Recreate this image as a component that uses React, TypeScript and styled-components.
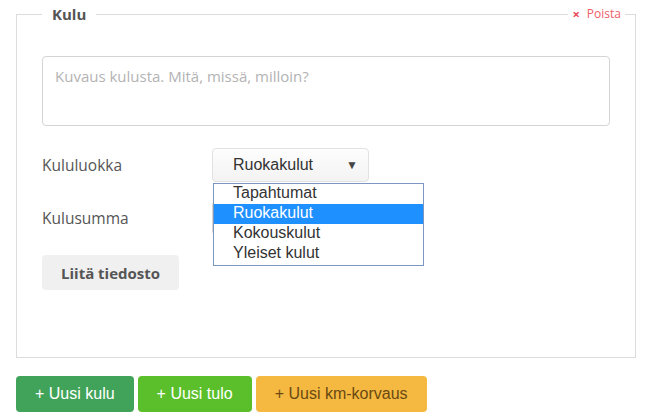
import React from "react";
import styled, { createGlobalStyle } from "styled-components";

const GlobalStyle = createGlobalStyle`
  html, body {
    margin: 0;
    padding: 0;
    background: #fff;
  }
  body {
    font-family: "Open Sans", "Liberation Sans", Arial, sans-serif;
    color: #555;
  }
`;

const Page = styled.div`
  padding: 4px 11px 0 16px;
`;

const Card = styled.div`
  position: relative;
`;

const Fieldset = styled.fieldset`
  margin: 0;
  border: 1px solid #dcdcdc;
  padding: 32px 25px 67px 25px;
  min-width: 0;
`;

const Legend = styled.legend`
  padding: 0 10px;
  font-weight: 700;
  font-size: 15px;
  line-height: 20px;
  color: #555;
`;

const RemoveLink = styled.a`
  position: absolute;
  top: 2px;
  right: 11px;
  padding: 0 4px;
  background: #fff;
  font-size: 12px;
  line-height: 16px;
  color: #ef5d68;
  cursor: pointer;
  display: flex;
  align-items: center;
  gap: 7px;
`;

const Cross = styled.span`
  font-weight: 700;
  font-size: 13px;
  color: #e84a55;
`;

const Textarea = styled.textarea`
  display: block;
  box-sizing: border-box;
  width: 100%;
  height: 70px;
  margin: 0 0 22px 0;
  padding: 8px 12px;
  border: 1px solid #d4d4d4;
  border-radius: 4px;
  resize: none;
  font-family: "Open Sans", sans-serif;
  font-size: 15px;
  line-height: 22px;
  color: #555;
  &::placeholder {
    color: #b3b3b3;
  }
`;

const Row = styled.div<{ $gap: number }>`
  display: grid;
  grid-template-columns: 170px auto;
  align-items: center;
  margin-bottom: ${({ $gap }) => $gap}px;
`;

const Label = styled.label`
  font-size: 15.5px;
  color: #555;
`;

const SelectWrap = styled.div`
  position: relative;
  width: 157px;
`;

const SelectButton = styled.div`
  box-sizing: border-box;
  height: 34px;
  width: 157px;
  padding: 0 10px 0 20px;
  display: flex;
  align-items: center;
  justify-content: space-between;
  border: 1px solid #e2e2e2;
  border-radius: 4px;
  background: linear-gradient(#fdfdfd, #f3f3f3);
  font-family: "Liberation Sans", Arial, sans-serif;
  font-size: 16px;
  color: #333;
`;

const Caret = styled.span`
  font-size: 12px;
  color: #444;
`;

const OptionList = styled.ul`
  position: absolute;
  top: 35px;
  left: 1px;
  width: 211px;
  box-sizing: border-box;
  margin: 0;
  padding: 0 0 1px 0;
  list-style: none;
  background: #fff;
  border: 1px solid #7c96c4;
  z-index: 5;
  font-family: "Liberation Sans", Arial, sans-serif;
  font-size: 16px;
`;

const OptionItem = styled.li<{ $active?: boolean }>`
  height: 20px;
  line-height: 18px;
  padding-left: 19px;
  color: ${({ $active }) => ($active ? "#fff" : "#333")};
  background: ${({ $active }) => ($active ? "#1e90ff" : "transparent")};
`;

const Input = styled.input`
  box-sizing: border-box;
  width: 157px;
  height: 34px;
  border: 1px solid #d4d4d4;
  border-radius: 4px;
  padding: 0 12px;
`;

const AttachButton = styled.button`
  height: 35px;
  padding: 0 19px;
  border: none;
  border-radius: 4px;
  background: #f0f0f0;
  font-family: "Open Sans", sans-serif;
  font-weight: 700;
  font-size: 15px;
  color: #555;
`;

const Actions = styled.div`
  display: flex;
  gap: 4px;
  margin-top: 18px;
`;

const ActionButton = styled.button<{ $bg: string; $fg: string }>`
  height: 36px;
  padding: 0 19px;
  border: none;
  border-radius: 4px;
  background: ${({ $bg }) => $bg};
  color: ${({ $fg }) => $fg};
  font-family: "Liberation Sans", Arial, sans-serif;
  font-size: 16px;
`;

const options = ["Tapahtumat", "Ruokakulut", "Kokouskulut", "Yleiset kulut"];

export default function App() {
  return (
    <Page>
      <GlobalStyle />
      <Card>
        <Fieldset>
          <Legend>Kulu</Legend>
          <Textarea placeholder="Kuvaus kulusta. Mitä, missä, milloin?" />
          <Row $gap={19}>
            <Label>Kululuokka</Label>
            <SelectWrap>
              <SelectButton>
                <span>Ruokakulut</span>
                <Caret>▼</Caret>
              </SelectButton>
              <OptionList>
                {options.map((o) => (
                  <OptionItem key={o} $active={o === "Ruokakulut"}>
                    {o}
                  </OptionItem>
                ))}
              </OptionList>
            </SelectWrap>
          </Row>
          <Row $gap={20}>
            <Label>Kulusumma</Label>
            <Input />
          </Row>
          <AttachButton>Liitä tiedosto</AttachButton>
        </Fieldset>
        <RemoveLink>
          <Cross>×</Cross>
          Poista
        </RemoveLink>
      </Card>
      <Actions>
        <ActionButton $bg="#41a35a" $fg="#fff">+ Uusi kulu</ActionButton>
        <ActionButton $bg="#5bbf2b" $fg="#fff">+ Uusi tulo</ActionButton>
        <ActionButton $bg="#f5b841" $fg="#6a4a12">+ Uusi km-korvaus</ActionButton>
      </Actions>
    </Page>
  );
}
